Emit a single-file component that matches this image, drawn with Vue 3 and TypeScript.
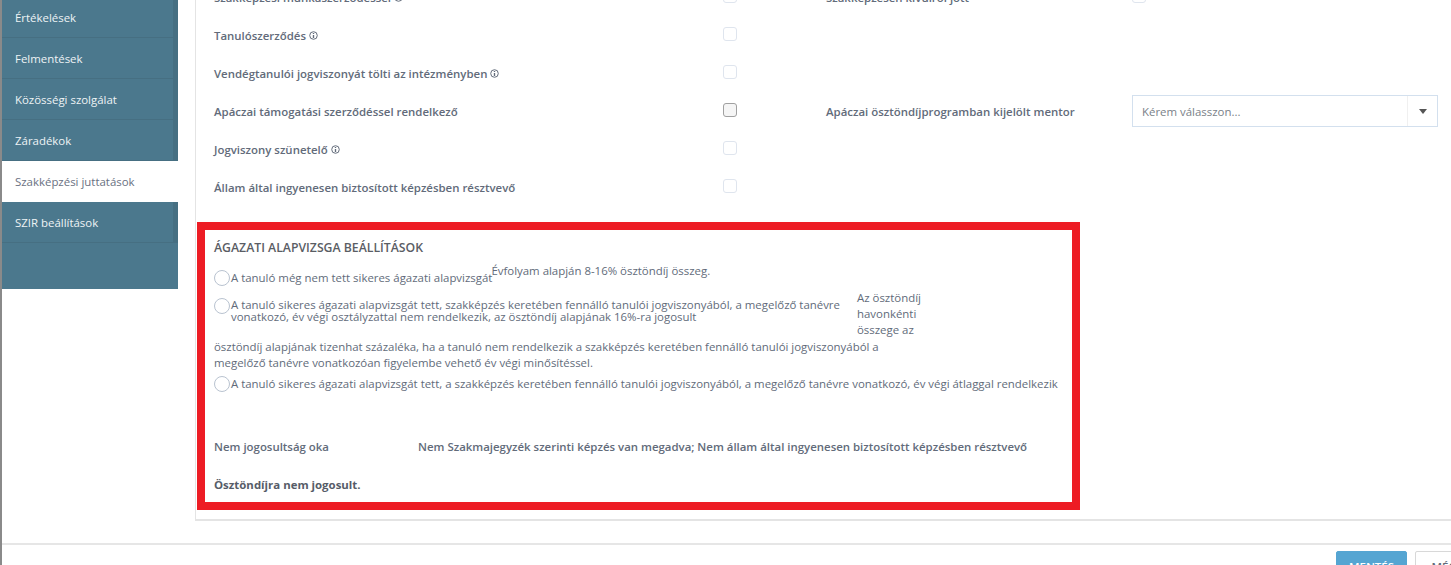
<template>
  <div class="page">
    <div class="content">
      <aside class="sidebar">
        <div
          v-for="item in menu"
          :key="item"
          class="menu-item"
          :class="{ active: item === activeItem }"
        >
          {{ item }}
        </div>
        <div class="menu-rest"></div>
      </aside>

      <main class="panel">
        <div class="form-grid">
          <div v-for="row in rows" :key="row.label" class="form-row">
            <div class="left-col">
              <span class="row-label">
                {{ row.label }}
                <svg v-if="row.info" class="info" viewBox="0 0 10 10" width="9" height="9">
                  <circle cx="5" cy="5" r="4.2" fill="none" stroke="currentColor" stroke-width="1.1" />
                  <path d="M5 2.2v1.2M5 4.4v3.4" fill="none" stroke="currentColor" stroke-width="1.5" />
                </svg>
              </span>
              <span class="check" :class="{ dark: row.dark }"></span>
            </div>
            <div v-if="row.rightCheck" class="right-col">
              <span class="row-label">{{ row.rightCheck }}</span>
              <span class="check"></span>
            </div>
            <div v-if="row.select" class="right-col">
              <span class="row-label">{{ row.select }}</span>
              <div class="select">
                <span class="select-text">Kérem válasszon...</span>
                <span class="select-btn"><span class="caret"></span></span>
              </div>
            </div>
          </div>
        </div>

        <section class="exam-box">
          <h3 class="exam-title">Ágazati alapvizsga beállítások</h3>

          <div class="option first">
            <span class="radio"></span>
            <span class="option-text">A tanuló még nem tett sikeres ágazati alapvizsgát</span>
            <span class="option-note">Évfolyam alapján 8-16% ösztöndíj összeg.</span>
          </div>

          <div class="option second">
            <span class="radio"></span>
            <span class="option-text tight">A tanuló sikeres ágazati alapvizsgát tett, szakképzés keretében fennálló tanulói jogviszonyából, a megelőző tanévre vonatkozó, év végi osztályzattal nem rendelkezik, az ösztöndíj alapjának 16%-ra jogosult</span>
            <span class="side-note">Az ösztöndíj havonkénti összege az</span>
          </div>
          <p class="note-rest">ösztöndíj alapjának tizenhat százaléka, ha a tanuló nem rendelkezik a szakképzés keretében fennálló tanulói jogviszonyából a megelőző tanévre vonatkozóan figyelembe vehető év végi minősítéssel.</p>

          <div class="option third">
            <span class="radio"></span>
            <span class="option-text">A tanuló sikeres ágazati alapvizsgát tett, a szakképzés keretében fennálló tanulói jogviszonyából, a megelőző tanévre vonatkozó, év végi átlaggal rendelkezik</span>
          </div>

          <div class="reason">
            <span class="reason-label">Nem jogosultság oka</span>
            <span>Nem Szakmajegyzék szerinti képzés van megadva; Nem állam által ingyenesen biztosított képzésben résztvevő</span>
          </div>
          <p class="verdict">Ösztöndíjra nem jogosult.</p>
        </section>
      </main>
    </div>

    <footer class="footer">
      <button type="button" class="btn primary">MENTÉS</button>
      <button type="button" class="btn">MÉGSE</button>
    </footer>
  </div>
</template>

<script setup lang="ts">
interface FormRow {
  label: string
  info?: boolean
  dark?: boolean
  rightCheck?: string
  select?: string
}

const activeItem = 'Szakképzési juttatások'

const menu: string[] = [
  'Értékelések',
  'Felmentések',
  'Közösségi szolgálat',
  'Záradékok',
  'Szakképzési juttatások',
  'SZIR beállítások'
]

const rows: FormRow[] = [
  { label: 'Szakképzési munkaszerződéssel', info: true, rightCheck: 'Szakképzésen kívülről jött' },
  { label: 'Tanulószerződés', info: true },
  { label: 'Vendégtanulói jogviszonyát tölti az intézményben', info: true },
  {
    label: 'Apáczai támogatási szerződéssel rendelkező',
    dark: true,
    select: 'Apáczai ösztöndíjprogramban kijelölt mentor'
  },
  { label: 'Jogviszony szünetelő', info: true },
  { label: 'Állam által ingyenesen biztosított képzésben résztvevő' }
]
</script>

<style>
html,
body {
  margin: 0;
  background: #fff;
}
</style>

<style scoped>
.page {
  height: 565px;
  overflow: hidden;
  display: flex;
  flex-direction: column;
  font-family: 'Open Sans', 'Noto Sans', sans-serif;
  font-size: 11.43px;
  color: #626b7a;
  border-left: 2px solid #8a8a8a;
  box-sizing: border-box;
}

.content {
  display: flex;
  align-items: flex-start;
  height: 543px;
  flex: none;
  border-bottom: 2px solid #e6e6e6;
  box-sizing: content-box;
}

.sidebar {
  width: 176px;
  flex: none;
  margin-top: -3px;
  background: #4b788d;
  color: #eef3f5;
}

.menu-item {
  height: 41px;
  line-height: 41px;
  padding-left: 13px;
  box-sizing: border-box;
  border-right: 5px solid #466f82;
  border-bottom: 1px solid #466f82;
}

.menu-item.active {
  background: #fff;
  color: #6a7182;
  border-right-color: #fff;
  border-bottom-color: #fff;
}

.menu-rest {
  height: 46px;
}

.panel {
  margin-left: 17px;
  width: 1256px;
  height: 521px;
  flex: none;
  border-left: 1px solid #e4e4e4;
  border-bottom: 2px solid #e4e4e4;
  box-sizing: border-box;
  overflow: hidden;
  padding-left: 1px;
}

.form-grid {
  margin-top: -22px;
}

.form-row {
  height: 38px;
  display: flex;
  align-items: center;
  padding-left: 17px;
}

.left-col {
  width: 612px;
  display: flex;
  align-items: center;
  flex: none;
}

.right-col {
  display: flex;
  align-items: center;
}

.row-label {
  font-weight: 600;
  display: inline-flex;
  align-items: center;
  gap: 3px;
}

.left-col .row-label {
  width: 509px;
}

.right-col .row-label {
  width: 306px;
}

.check {
  width: 14px;
  height: 14px;
  margin-top: -2px;
  border: 1px solid #dfe5ee;
  border-radius: 3px;
  box-sizing: border-box;
  background: #fff;
  flex: none;
}

.check.dark {
  border-color: #a0a0a0;
  background: #f5f5f5;
}

.select {
  width: 306px;
  height: 32px;
  border: 1px solid #d3e0ee;
  box-sizing: border-box;
  display: flex;
  align-items: center;
  justify-content: space-between;
}

.select-text {
  padding-left: 9px;
  color: #7a7f88;
}

.select-btn {
  width: 30px;
  height: 100%;
  border-left: 1px solid #f0f0f0;
  box-sizing: border-box;
  display: flex;
  align-items: center;
  justify-content: center;
}

.caret {
  border-left: 4px solid transparent;
  border-right: 4px solid transparent;
  border-top: 5px solid #555;
}

.exam-box {
  width: 883px;
  height: 288px;
  margin-top: 16px;
  border: 8px solid #ed1c24;
  box-sizing: border-box;
  padding: 9px 9px 0;
  line-height: 16px;
}

.exam-title {
  margin: 0;
  font-size: 12.25px;
  line-height: 18px;
  font-weight: 600;
  text-transform: uppercase;
  color: #5a5d64;
}

.option {
  display: flex;
  align-items: flex-start;
}

.radio {
  width: 16px;
  height: 16px;
  margin-right: 1px;
  border: 1px solid #b9c3d0;
  border-radius: 50%;
  box-sizing: border-box;
  flex: none;
  background: #fff;
}

.first {
  margin-top: 13px;
}

.option-note {
  margin-top: -7px;
  margin-left: -1px;
}

.second {
  margin-top: 12px;
}

.tight {
  width: 614px;
  line-height: 12px;
  margin-top: 1px;
  margin-right: 12px;
}

.side-note {
  width: 70px;
  margin-top: -8px;
  height: 48px;
  flex: none;
}

.note-rest {
  margin: 1px 0 0;
  width: 680px;
}

.third {
  margin-top: 5px;
}

.reason {
  margin-top: 47px;
  display: flex;
  font-weight: 600;
}

.reason-label {
  width: 204px;
  flex: none;
}

.verdict {
  margin: 22px 0 0;
  font-weight: 700;
  color: #565c68;
}

.footer {
  flex: none;
  display: flex;
  gap: 8px;
  padding: 6px 0 0 1334px;
}

.btn {
  width: 71px;
  height: 30px;
  flex: none;
  border: 1px solid #d8d8d8;
  border-radius: 2px;
  background: #fff;
  color: #626b7a;
  font: 600 11.43px 'Open Sans', sans-serif;
  padding: 0;
}

.btn.primary {
  background: #55a5d2;
  border-color: #55a5d2;
  color: #fff;
}
</style>
